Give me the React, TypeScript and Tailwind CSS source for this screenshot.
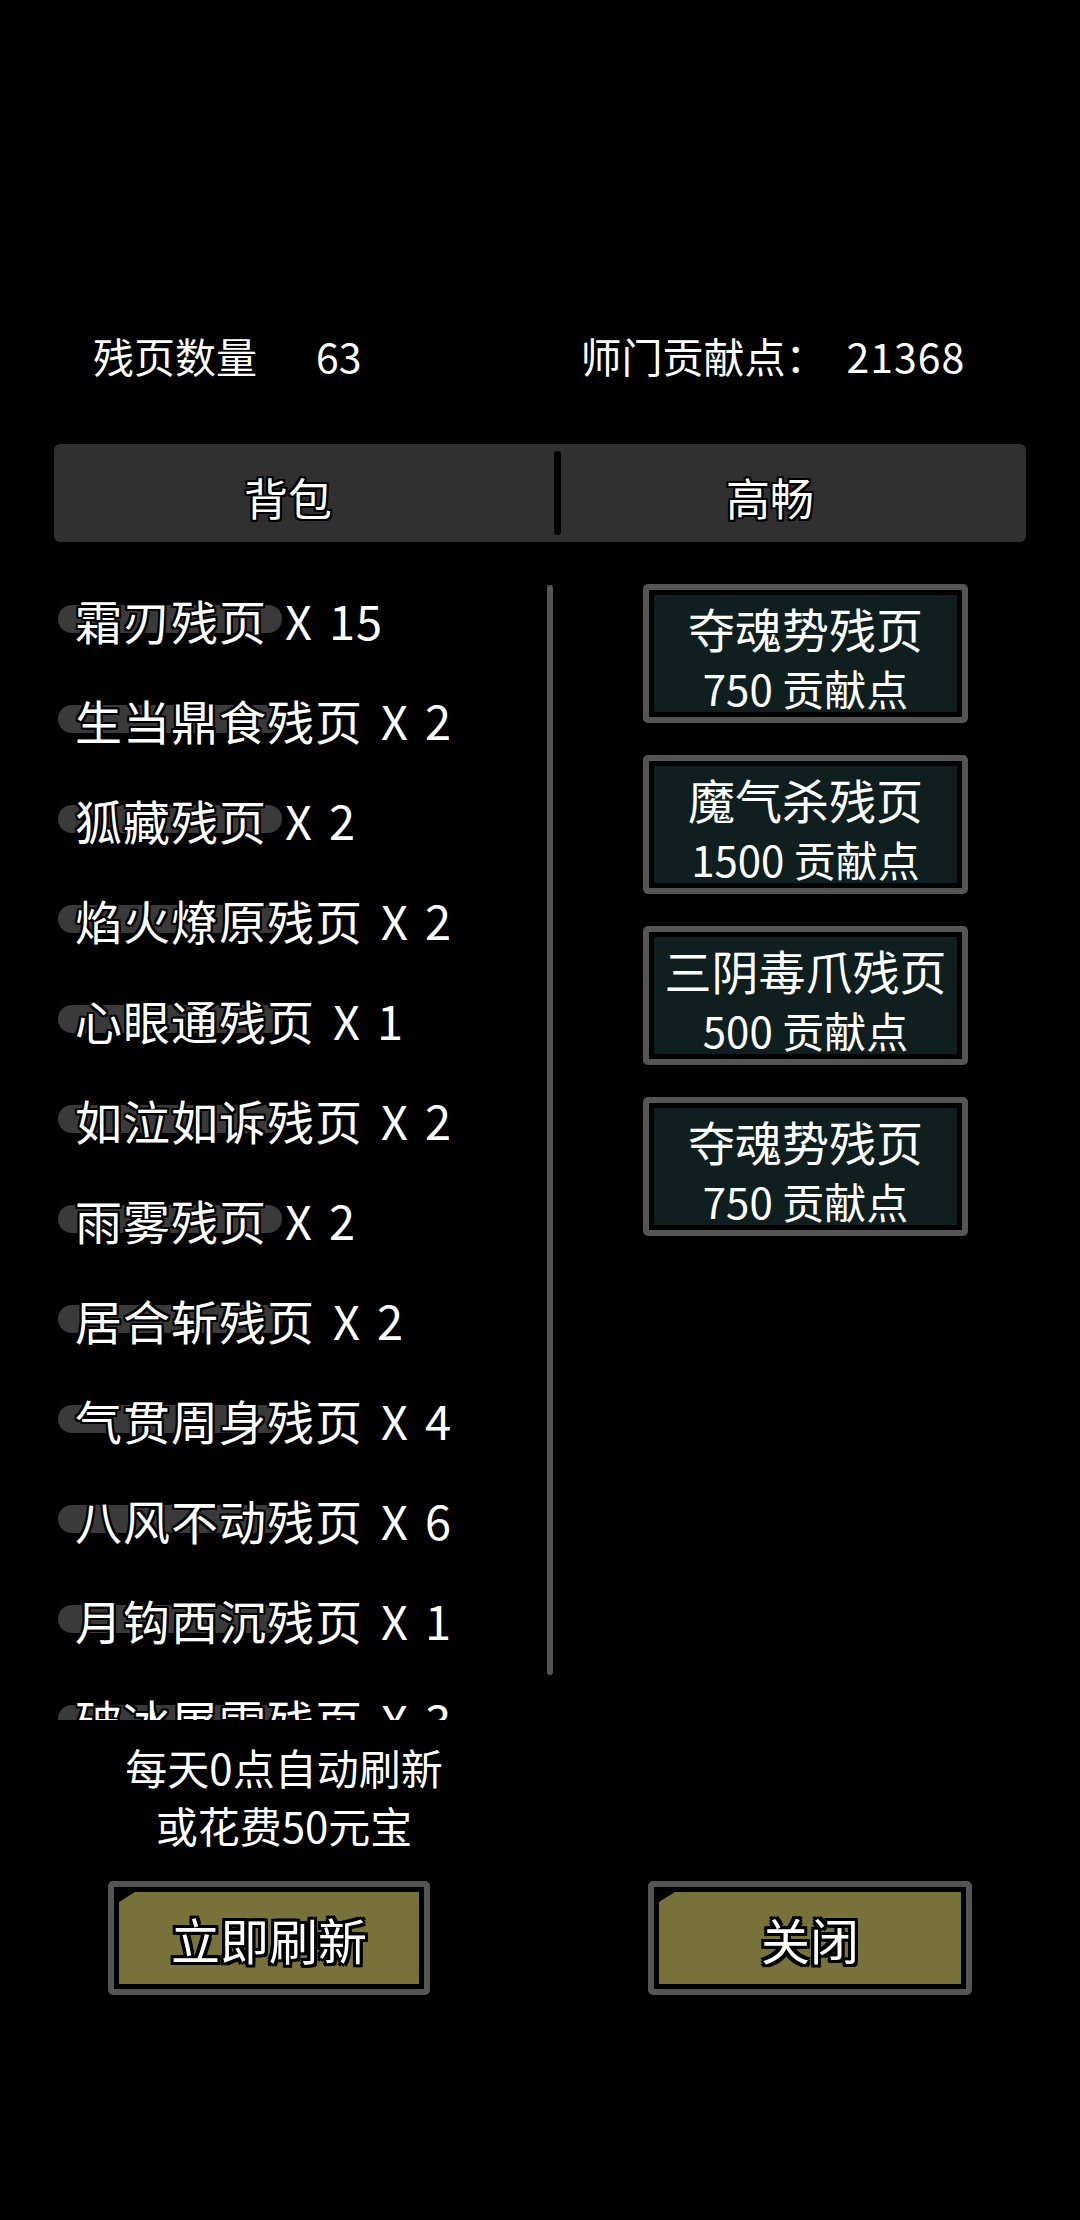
import React from "react"

const pages = [
  { name: "霜刃残页", count: 15 },
  { name: "生当鼎食残页", count: 2 },
  { name: "狐藏残页", count: 2 },
  { name: "焰火燎原残页", count: 2 },
  { name: "心眼通残页", count: 1 },
  { name: "如泣如诉残页", count: 2 },
  { name: "雨雾残页", count: 2 },
  { name: "居合斩残页", count: 2 },
  { name: "气贯周身残页", count: 4 },
  { name: "八风不动残页", count: 6 },
  { name: "月钩西沉残页", count: 1 },
  { name: "破冰屠雷残页", count: 3 },
]

const shop = [
  { name: "夺魂势残页", cost: 750 },
  { name: "魔气杀残页", cost: 1500 },
  { name: "三阴毒爪残页", cost: 500 },
  { name: "夺魂势残页", cost: 750 },
]

// thin black outline round white text
const outline =
  "[text-shadow:-2px_-2px_0_#000,2px_-2px_0_#000,-2px_2px_0_#000,2px_2px_0_#000,0_-2px_0_#000,0_2px_0_#000,-2px_0_0_#000,2px_0_0_#000]"
const outlineThick =
  "[text-shadow:-3px_-3px_0_#000,3px_-3px_0_#000,-3px_3px_0_#000,3px_3px_0_#000,0_-3px_0_#000,0_3px_0_#000,-3px_0_0_#000,3px_0_0_#000]"

function ActionButton({ label, width }: { label: string; width: string }) {
  return (
    <div className={`${width} h-[114px] border-[6px] border-[#555555] rounded-[5px] bg-black p-[5px]`}>
      <div className="w-full h-full bg-[#76723a] flex items-center justify-center [clip-path:polygon(16px_0,100%_0,100%_100%,0_100%,0_10px)]">
        <span className={`text-[49px] leading-none text-white ${outlineThick}`}>{label}</span>
      </div>
    </div>
  )
}

export default function App() {
  return (
    <div className="w-[1080px] h-[2220px] bg-black text-white font-['Noto_Sans_CJK_SC',sans-serif] flex flex-col pt-[334px]">
      {/* counters */}
      <div className="h-[42px] flex items-center text-[41px] leading-none">
        <span className="ml-[93px]">残页数量</span>
        <span className="ml-[59px]">63</span>
        <span className="ml-[219px]">师门贡献点：</span>
        <span className="ml-[20px] tracking-[1px]">21368</span>
      </div>

      {/* tabs */}
      <div className="mt-[68px] mx-[54px] h-[98px] bg-[#303030] rounded-[6px] flex items-center">
        <div className={`w-[468px] text-center text-[44px] leading-none pt-[8px] ${outline}`}>背包</div>
        <div className="ml-[32px] w-[7px] h-[84px] rounded-full bg-black" />
        <div className={`w-[418px] text-center text-[44px] leading-none pt-[8px] ${outline}`}>高畅</div>
      </div>

      {/* list + shop */}
      <div className="flex">
        <div className="ml-[54px] mt-[27px] w-[493px] h-[1151px] overflow-hidden flex flex-col">
          {pages.map((p, i) => (
            <div key={i} className="h-[100px] shrink-0 flex items-center relative">
              <div className="absolute left-[4px] top-[36px] w-[224px] h-[28px] rounded-full bg-[#3a3a3a]" />
              <span className={`relative ml-[21px] text-[47px] leading-none tracking-[1px] whitespace-nowrap ${outline}`}>
                {p.name}
                <span className="ml-[18px]">X</span>
                <span className="ml-[16px]">{p.count}</span>
              </span>
            </div>
          ))}
        </div>
        <div className="mt-[43px] w-[6px] h-[1090px] rounded-full bg-[#555555]" />
        <div className="ml-[90px] mt-[42px] flex flex-col gap-[32px]">
          {shop.map((s, i) => (
            <div key={i} className="w-[325px] h-[139px] border-[6px] border-[#555555] rounded-[5px] bg-black p-[5px]">
              <div className="w-full h-full bg-[#0f1e1e] flex flex-col items-center pt-[9px] gap-[16px] leading-none">
                <span className="text-[47px] leading-none">{s.name}</span>
                <span className="text-[42px] leading-none">{s.cost} 贡献点</span>
              </div>
            </div>
          ))}
        </div>
      </div>

      {/* refresh hint */}
      <div className="mt-[18px] ml-[54px] w-[460px] text-center text-[42px] leading-[58px]">
        <div>每天0点自动刷新</div>
        <div>或花费50元宝</div>
      </div>

      {/* buttons */}
      <div className="mt-[27px] flex">
        <div className="ml-[108px]">
          <ActionButton label="立即刷新" width="w-[322px]" />
        </div>
        <div className="ml-[218px]">
          <ActionButton label="关闭" width="w-[324px]" />
        </div>
      </div>
    </div>
  )
}
